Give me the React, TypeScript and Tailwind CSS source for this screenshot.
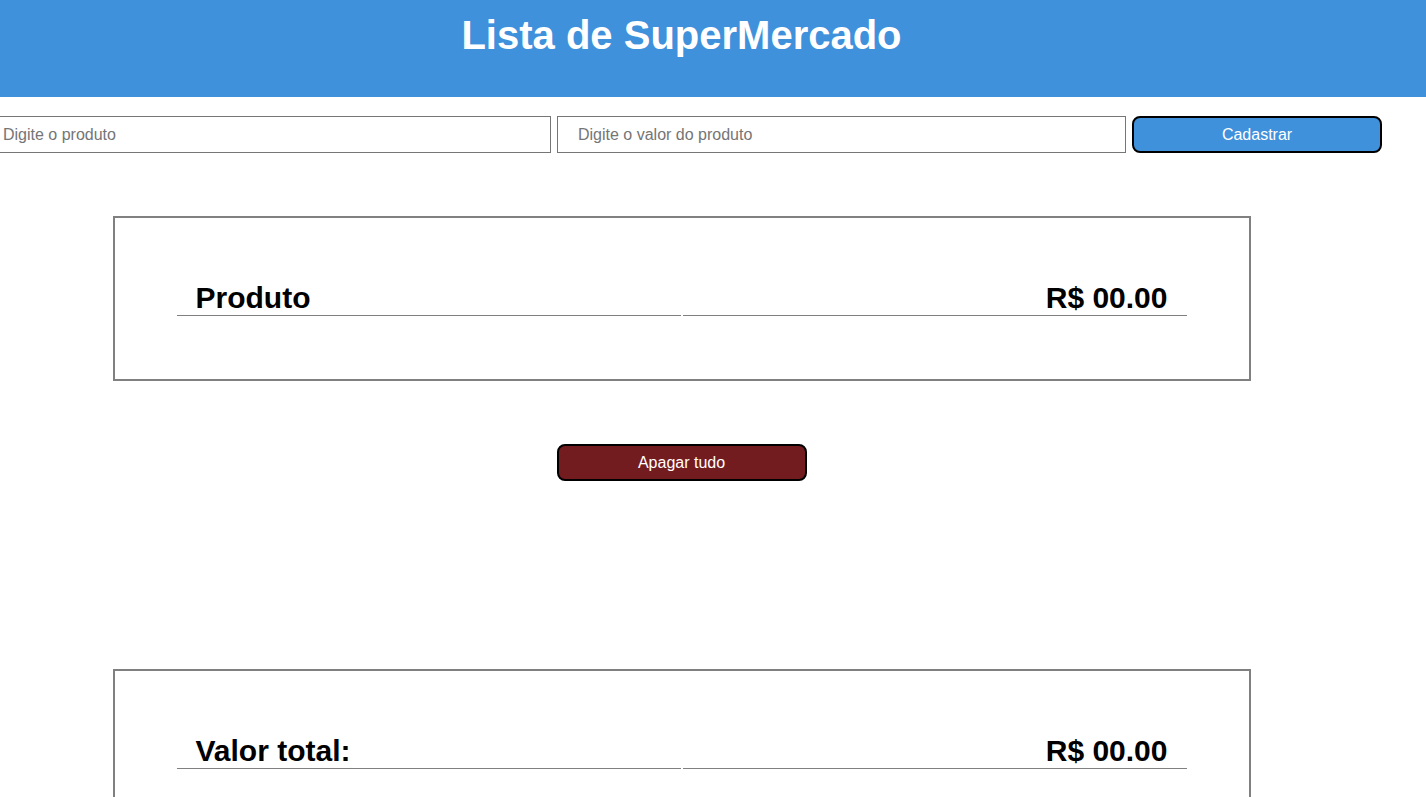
import React from "react";

function Row({ label }: { label: string }) {
  return (
    <div className="flex w-[1010px] mx-auto gap-[2px]">
      <div className="flex-1 border-b border-[#808080] pl-[19px] text-[30px] leading-[34px] font-bold text-black">
        {label}
      </div>
      <div className="flex-1 border-b border-[#808080] pr-[19px] text-right text-[30px] leading-[34px] font-bold text-black">
        R$ 00.00
      </div>
    </div>
  );
}

export default function App() {
  return (
    <div className="min-h-[797px] bg-white overflow-hidden" style={{ fontFamily: '"Liberation Sans", Arial, sans-serif' }}>
      <header className="h-[97px] bg-[#4091db]">
        <div className="w-[1363px] text-center pt-[12px]">
          <h1 className="text-[40px] leading-[46px] font-bold text-white">Lista de SuperMercado</h1>
        </div>
      </header>
      <div className="mt-[19px] flex gap-[6px] h-[37px]">
        <input
          placeholder="Digite o produto"
          className="-ml-[2px] w-[553px] h-[37px] border border-[#767676] pl-[4px] text-[16px] placeholder:text-[#757575] outline-none"
        />
        <input
          placeholder="Digite o valor do produto"
          className="w-[569px] h-[37px] border border-[#767676] pl-[20px] text-[16px] placeholder:text-[#757575] outline-none"
        />
        <button className="w-[250px] h-[37px] bg-[#4091db] border-2 border-black rounded-[8px] text-white text-[16px]">
          Cadastrar
        </button>
      </div>
      <div className="w-[1363px]">
        <div className="mt-[63px] mx-auto w-[1138px] h-[165px] border-2 border-[#808080] flex items-center">
          <Row label="Produto" />
        </div>
        <div className="mt-[63px] flex justify-center">
          <button className="w-[250px] h-[37px] bg-[#731c1f] border-2 border-black rounded-[8px] text-white text-[16px]">
            Apagar tudo
          </button>
        </div>
        <div className="mt-[188px] mx-auto w-[1138px] h-[165px] border-2 border-[#808080] flex items-center">
          <Row label="Valor total:" />
        </div>
      </div>
    </div>
  );
}
